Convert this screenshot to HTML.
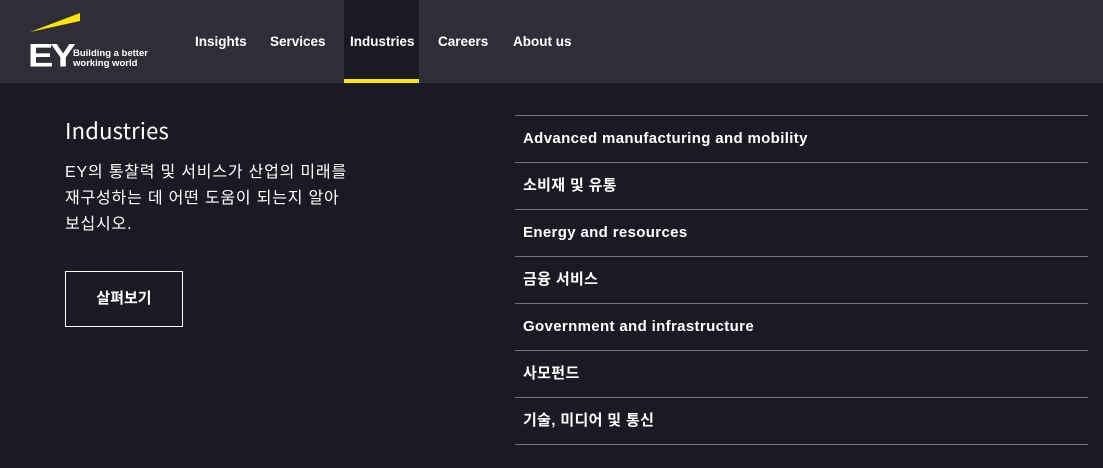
<!DOCTYPE html>
<html><head><meta charset="utf-8"><style>
*{margin:0;padding:0;box-sizing:border-box}
body{width:1103px;height:468px;background:#1a1a24;font-family:"Liberation Sans","Noto Sans CJK KR",sans-serif;color:#fff;overflow:hidden;position:relative}
.hdr{position:absolute;left:0;top:0;width:1103px;height:83px;background:#2e2e38}
.nav{position:absolute;top:0;height:83px;font-size:13.5px;font-weight:bold;line-height:83px}
.nav span{position:absolute;white-space:nowrap}
.act{position:absolute;left:344px;top:0;width:75px;height:83px;background:#1a1a24;border-bottom:4px solid #ffe600}
h1{position:absolute;left:65px;top:115px;font-size:22px;font-weight:normal;letter-spacing:0.2px;font-family:"Noto Sans CJK KR","Liberation Sans",sans-serif;line-height:30px}
.p{position:absolute;left:65px;top:160px;font-size:16px;line-height:26px;width:340px;white-space:nowrap;letter-spacing:0.8px}
.btn{position:absolute;left:65px;top:271px;width:118px;height:56px;border:1px solid #fff;font-size:15px;font-weight:bold;text-align:center;line-height:54px}
.list{position:absolute;left:515px;top:115px;width:573px;border-top:1px solid #747480}
.list div{height:47px;border-bottom:1px solid #747480;padding-left:8px;font-size:15px;font-weight:bold;line-height:46px;letter-spacing:0.35px}
</style></head><body>
<div class="hdr"></div>
<div class="act"></div>
<svg style="position:absolute;left:28px;top:12px" width="120" height="56">
<polygon points="2,20 52,1 52,9" fill="#ffe600"/>
<text x="0" y="55" font-family="Liberation Sans" font-weight="bold" font-size="38" fill="#fff" letter-spacing="-3" transform="scale(1,0.85) translate(0,9)">EY</text>
<text x="45" y="44" font-family="Liberation Sans" font-weight="bold" font-size="9.5" fill="#fff">Building a better</text>
<text x="45" y="54" font-family="Liberation Sans" font-weight="bold" font-size="9.5" fill="#fff">working world</text>
</svg>
<div class="nav"><span style="left:195px">Insights</span><span style="left:270px">Services</span><span style="left:350px">Industries</span><span style="left:438px">Careers</span><span style="left:513px">About us</span></div>
<h1>Industries</h1>
<div class="p">EY의 통찰력 및 서비스가 산업의 미래를<br>재구성하는 데 어떤 도움이 되는지 알아<br>보십시오.</div>
<div class="btn">살펴보기</div>
<div class="list">
<div>Advanced manufacturing and mobility</div>
<div>소비재 및 유통</div>
<div>Energy and resources</div>
<div>금융 서비스</div>
<div>Government and infrastructure</div>
<div>사모펀드</div>
<div>기술, 미디어 및 통신</div>
</div>
</body></html>
